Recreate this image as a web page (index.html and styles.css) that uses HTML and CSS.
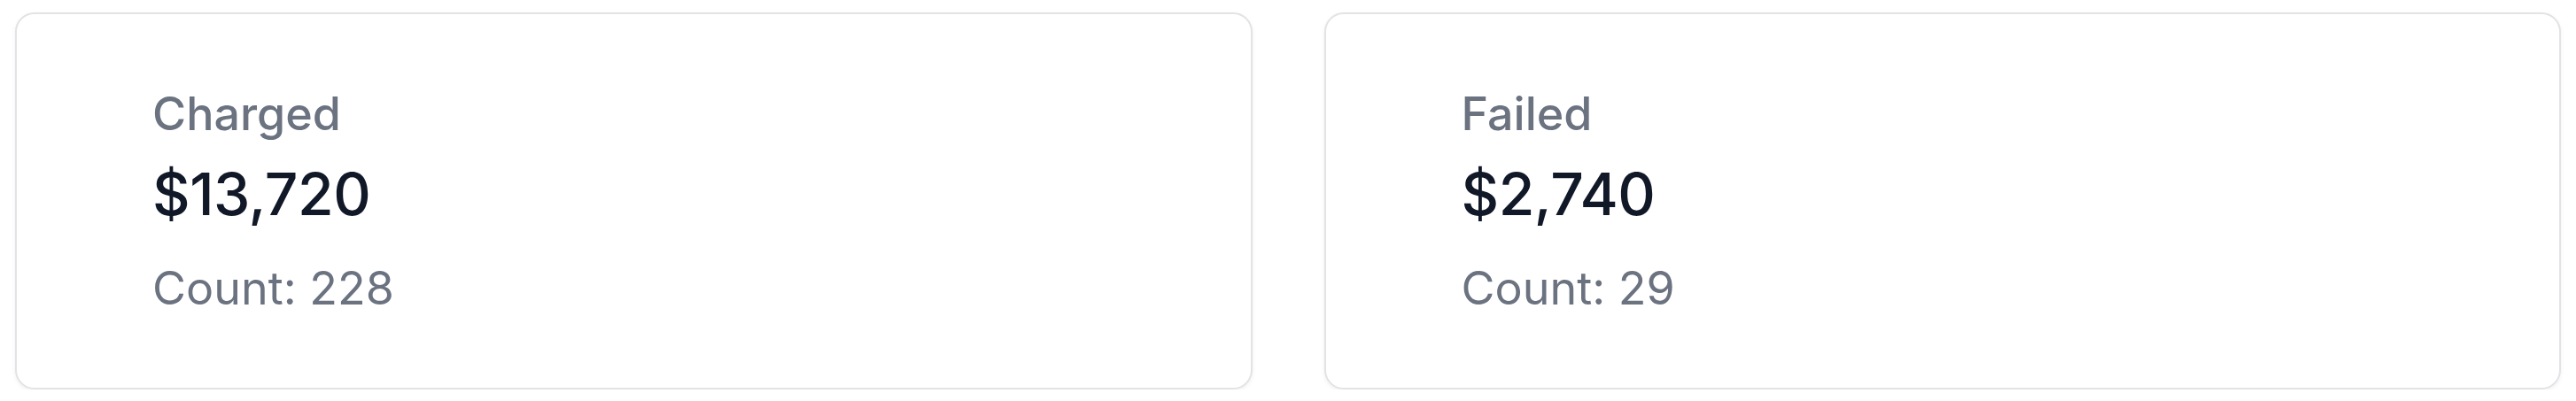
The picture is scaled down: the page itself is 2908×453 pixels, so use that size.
FILE: index.html
```html
<!DOCTYPE html>
<html lang="en">
<head>
<meta charset="utf-8">
<title>Payment summary</title>
<link rel="stylesheet" href="styles.css">
</head>
<body>
<div class="stats">
  <div class="card">
    <div class="label">Charged</div>
    <div class="value">$13,720</div>
    <div class="count">Count: 228</div>
  </div>
  <div class="card">
    <div class="label">Failed</div>
    <div class="value">$2,740</div>
    <div class="count">Count: 29</div>
  </div>
</div>
</body>
</html>
```
FILE: styles.css
```css
html, body {
  margin: 0;
  padding: 0;
  background: #ffffff;
}
body {
  padding: 14px 17px 0 17px;
  font-family: Inter, "Liberation Sans", sans-serif;
}
.stats {
  display: flex;
  gap: 81px;
}
.card {
  flex: 1 1 0;
  box-sizing: border-box;
  height: 426px;
  border: 2px solid #e3e3e6;
  border-radius: 22px;
  background: #ffffff;
  box-shadow: 0 2px 5px rgba(0, 0, 0, 0.06);
  padding: 74px 0 0 153px;
}
.label {
  font-size: 52px;
  line-height: 78px;
  font-weight: 500;
  color: #6b7280;
}
.value {
  margin-top: 9px;
  font-size: 66px;
  line-height: 84px;
  font-weight: 500;
  letter-spacing: -0.5px;
  color: #111827;
}
.count {
  margin-top: 26px;
  font-size: 52px;
  line-height: 78px;
  font-weight: 400;
  color: #6b7280;
}
```
